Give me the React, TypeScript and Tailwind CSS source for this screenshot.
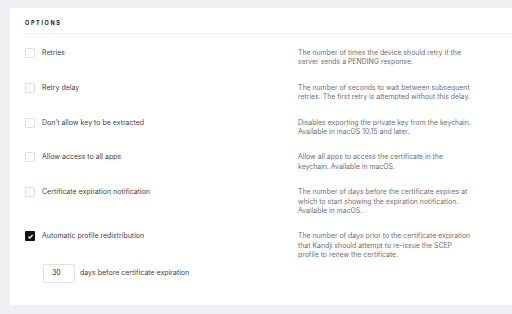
const rows = [
  { label: 'Retries', desc: ['The number of times the device should retry if the', 'server sends a PENDING response.'] },
  { label: 'Retry delay', desc: ['The number of seconds to wait between subsequent', 'retries. The first retry is attempted without this delay.'] },
  { label: 'Don\u2019t allow key to be extracted', desc: ['Disables exporting the private key from the keychain.', 'Available in macOS 10.15 and later.'] },
  { label: 'Allow access to all apps', desc: ['Allow all apps to access the certificate in the', 'keychain. Available in macOS.'] },
  { label: 'Certificate expiration notification', desc: ['The number of days before the certificate expires at', 'which to start showing the expiration notification.', 'Available in macOS.'] },
]

function Check({ on }: { on?: boolean }) {
  if (on) {
    return (
      <span className="flex h-[10px] w-[10px] shrink-0 items-center justify-center rounded-[1px] bg-[#111]">
        <svg width="7" height="7" viewBox="0 0 10 10" fill="none">
          <path d="M2 5.3 L4.1 7.3 L8 2.8" stroke="white" strokeWidth="1.8" />
        </svg>
      </span>
    )
  }
  return <span className="h-[10px] w-[10px] shrink-0 rounded-[1px] border border-[#dedfe3] bg-white" />
}

export default function App() {
  return (
    <div className="h-[314px] w-[512px] overflow-hidden bg-[#eff0f4] pl-[10px] pt-[8px] font-['Inter','Liberation_Sans',sans-serif]">
      <div className="h-[297px] bg-white pl-[15px] pt-[12px]">
        <div className="text-[5.5px] font-bold tracking-[0.3em] text-[#222] leading-[6px]">OPTIONS</div>
        <div className="mt-[7px] border-t border-dotted border-[#e2e3e6]" />

        <div className="mt-[14px] flex flex-col gap-[16px]">
          {rows.map(r => (
            <div key={r.label} className="grid grid-cols-[273px_1fr]">
              <div className="flex items-start gap-[7px]">
                <Check />
                <span className="text-[7px] leading-[10px] text-[#444]">{r.label}</span>
              </div>
              <div className="text-[6.9px] leading-[9.4px] text-[#707070]">
                {r.desc.map(l => <div key={l}>{l}</div>)}
              </div>
            </div>
          ))}

          <div className="grid grid-cols-[273px_1fr]">
            <div className="flex items-start gap-[7px]">
              <Check on />
              <span className="text-[7px] leading-[10px] text-[#444]">Automatic profile redistribution</span>
            </div>
            <div className="text-[6.9px] leading-[9.4px] text-[#707070]">
              <div>The number of days prior to the certificate expiration</div>
              <div>that Kandji should attempt to re-issue the SCEP</div>
              <div>profile to renew the certificate.</div>
            </div>
          </div>
        </div>

        <div className="ml-[18px] mt-[4px] flex items-center gap-[5px]">
          <div className="flex h-[19px] w-[32px] items-center rounded-[2px] border border-[#dfe0e4] pl-[8px] text-[7px] text-[#333]">30</div>
          <span className="text-[7px] text-[#444]">days before certificate expiration</span>
        </div>
      </div>
    </div>
  )
}
